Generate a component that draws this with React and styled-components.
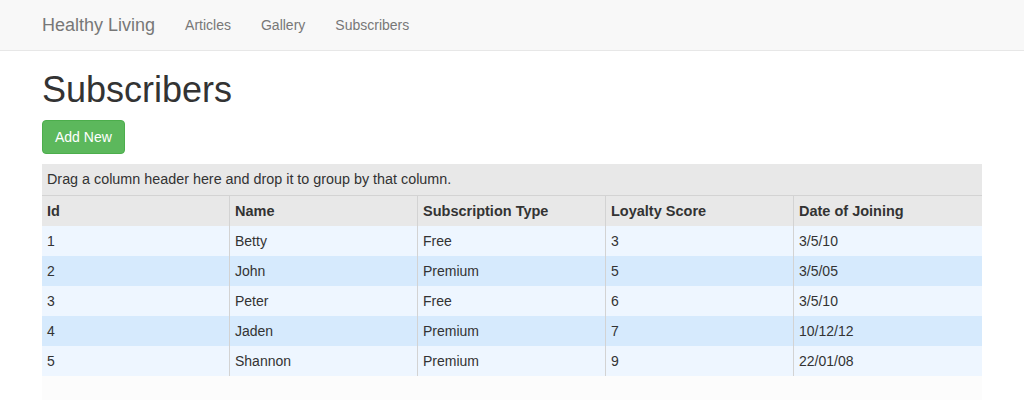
import React from "react";
import styled, { createGlobalStyle } from "styled-components";

const Global = createGlobalStyle`
  html, body { margin: 0; padding: 0; background: #fff; }
  body {
    font-family: "Liberation Sans", Arial, Helvetica, sans-serif;
    font-size: 14px;
    line-height: 1.42857;
    color: #333;
  }
  * { box-sizing: border-box; }
`;

const Navbar = styled.nav`
  height: 51px;
  background: #f8f8f8;
  border-bottom: 1px solid #e7e7e7;
`;

const Container = styled.div`
  width: 970px;
  margin: 0 auto;
  padding: 0 15px;
`;

const NavInner = styled(Container)`
  display: flex;
  align-items: center;
  height: 50px;
`;

const Brand = styled.a`
  font-size: 18px;
  line-height: 20px;
  color: #777;
  padding: 15px 15px 15px 0;
  text-decoration: none;
`;

const NavLink = styled.a`
  font-size: 14px;
  line-height: 20px;
  color: #777;
  padding: 15px;
  text-decoration: none;
`;

const Title = styled.h1`
  font-size: 36px;
  font-weight: 500;
  line-height: 1.1;
  margin: 19px 0 10px;
  color: #333;
`;

const Button = styled.button`
  display: block;
  font-family: inherit;
  font-size: 14px;
  line-height: 20px;
  padding: 6px 12px;
  height: 34px;
  color: #fff;
  background: #5cb85c;
  border: 1px solid #4cae4c;
  border-radius: 4px;
  margin-bottom: 10px;
`;

const Grid = styled.div`
  background: #fcfcfc;
  height: 240px;
`;

const GroupPanel = styled.div`
  height: 32px;
  padding: 5px 0 0 5px;
  font-size: 14.35px;
  line-height: 20px;
  background: #e8e8e8;
  border-bottom: 1px solid #d3d3d3;
`;

const Row = styled.div`
  display: grid;
  grid-template-columns: repeat(5, 1fr);
  height: 30px;
  background: ${(p) => p.$bg};
`;

const Cell = styled.div`
  padding: 0 5px;
  line-height: 30px;
  border-right: 1px solid #d3d3d3;
  &:last-child { border-right: none; }
  white-space: nowrap;
`;

const HeadCell = styled(Cell)`
  font-weight: bold;
  font-size: 14.5px;
`;

const headers = ["Id", "Name", "Subscription Type", "Loyalty Score", "Date of Joining"];
const rows = [
  ["1", "Betty", "Free", "3", "3/5/10"],
  ["2", "John", "Premium", "5", "3/5/05"],
  ["3", "Peter", "Free", "6", "3/5/10"],
  ["4", "Jaden", "Premium", "7", "10/12/12"],
  ["5", "Shannon", "Premium", "9", "22/01/08"],
];

export default function App() {
  return (
    <>
      <Global />
      <Navbar>
        <NavInner>
          <Brand href="#">Healthy Living</Brand>
          <NavLink href="#">Articles</NavLink>
          <NavLink href="#">Gallery</NavLink>
          <NavLink href="#">Subscribers</NavLink>
        </NavInner>
      </Navbar>
      <Container>
        <Title>Subscribers</Title>
        <Button>Add New</Button>
        <Grid>
          <GroupPanel>Drag a column header here and drop it to group by that column.</GroupPanel>
          <Row $bg="#e8e8e8">
            {headers.map((h) => (
              <HeadCell key={h}>{h}</HeadCell>
            ))}
          </Row>
          {rows.map((r, i) => (
            <Row key={i} $bg={i % 2 === 0 ? "#eef6ff" : "#d6eafd"}>
              {r.map((c, j) => (
                <Cell key={j}>{c}</Cell>
              ))}
            </Row>
          ))}
        </Grid>
      </Container>
    </>
  );
}
